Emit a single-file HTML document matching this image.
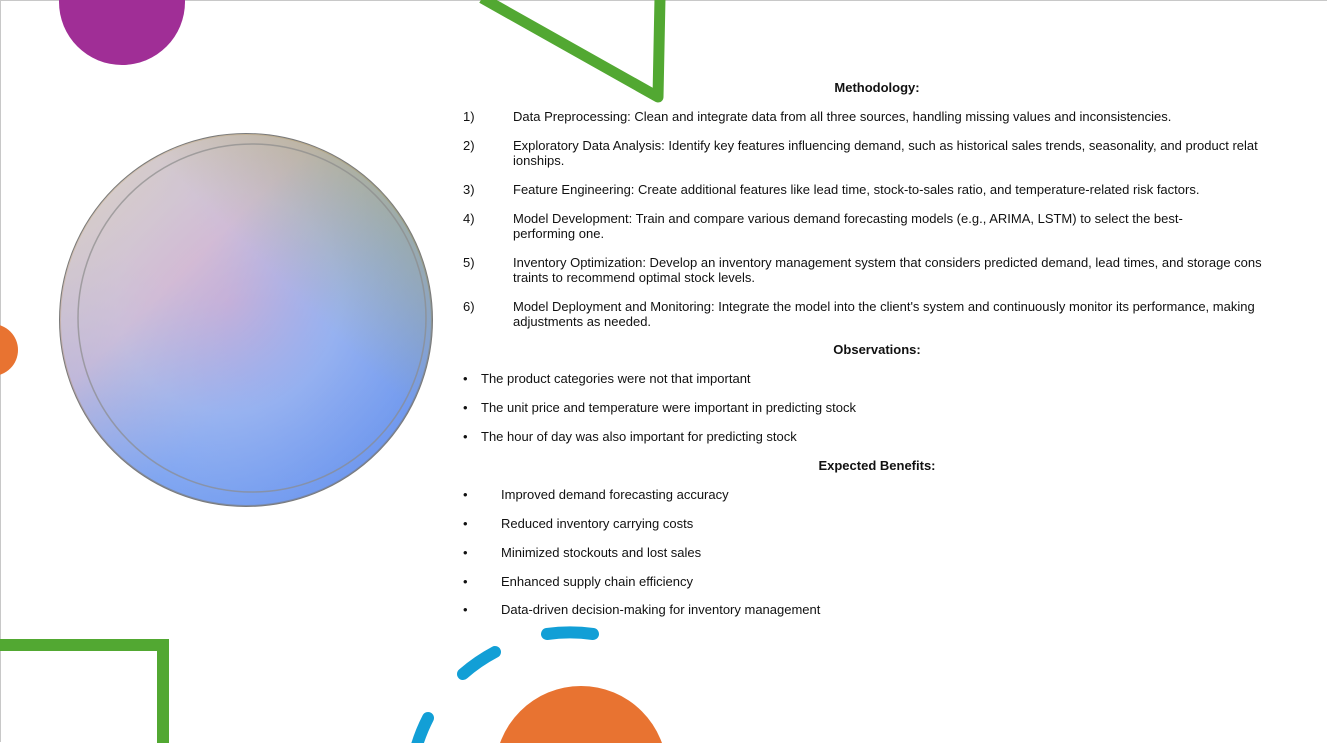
<!DOCTYPE html>
<html><head><style>
html,body{margin:0;width:1328px;height:743px;overflow:hidden}
body{background:#fff;position:relative;font-family:"Liberation Sans",Arial,sans-serif;font-size:13px;color:#111}
.frame{position:absolute;left:0;top:0;width:1326px;height:741px;border-left:1px solid #c8c8c8;border-top:1px solid #c8c8c8}
.t{position:absolute;white-space:nowrap}
.h{font-weight:bold;left:0;width:1754px;text-align:center}
</style></head><body>
<div class="frame"></div>
<svg width="1328" height="743" style="position:absolute;left:0;top:0">
<defs>
<radialGradient id="g1" cx="0.45" cy="0.45" r="0.6">
<stop offset="0" stop-color="#c9a6d6"/><stop offset="0.5" stop-color="#9fb4ee"/><stop offset="1" stop-color="#6f9af0"/></radialGradient>
<linearGradient id="g2" x1="0" y1="0" x2="1" y2="1">
<stop offset="0" stop-color="#efe3b8" stop-opacity="0.9"/><stop offset="0.35" stop-color="#e7c4cc" stop-opacity="0.6"/><stop offset="0.6" stop-color="#88b0f5" stop-opacity="0.3"/><stop offset="1" stop-color="#5f86e8" stop-opacity="0.6"/></linearGradient>
<linearGradient id="g3" x1="1" y1="0" x2="0" y2="1"><stop offset="0" stop-color="#b8b060" stop-opacity="0.8"/><stop offset="0.4" stop-color="#b8b060" stop-opacity="0"/></linearGradient>
</defs>
<circle cx="122" cy="2" r="63" fill="#a02e96"/>
<circle cx="-8" cy="350" r="26" fill="#e87331"/>
<circle cx="246" cy="320" r="186" fill="url(#g1)" stroke="#7a7a7a" stroke-width="2"/>
<circle cx="246" cy="320" r="186" fill="url(#g2)"/>
<circle cx="246" cy="320" r="186" fill="url(#g3)"/>
<circle cx="252" cy="318" r="174" fill="none" stroke="#8b8b8b" stroke-width="1.5" opacity="0.7"/>
<polyline points="482,-2 658,97 660,-2" fill="none" stroke="#52a832" stroke-width="11" stroke-linejoin="round"/>
<polyline points="0,645 163,645 163,745" fill="none" stroke="#52a832" stroke-width="12"/>
<circle cx="581" cy="772" r="86" fill="#e87331"/>
<g fill="none" stroke="#129fd6" stroke-width="12" stroke-linecap="round">
<path d="M547,634 A167 167 0 0 1 593,634"/>
<path d="M463,674 A167 167 0 0 1 495,652"/>
<path d="M417,745 A167 167 0 0 1 428,718"/>
</g>
</svg>
<div class="t h" style="top:80px">Methodology:</div>
<div class="t" style="left:463px;top:109px">1)</div><div class="t" style="left:513px;top:109px">Data Preprocessing: Clean and integrate data from all three sources, handling missing values and inconsistencies.</div>
<div class="t" style="left:463px;top:138px">2)</div><div class="t" style="left:513px;top:138px;line-height:15px">Exploratory Data Analysis: Identify key features influencing demand, such as historical sales trends, seasonality, and product relat<br>ionships.</div>
<div class="t" style="left:463px;top:182px">3)</div><div class="t" style="left:513px;top:182px">Feature Engineering: Create additional features like lead time, stock-to-sales ratio, and temperature-related risk factors.</div>
<div class="t" style="left:463px;top:211px">4)</div><div class="t" style="left:513px;top:211px;line-height:15px">Model Development: Train and compare various demand forecasting models (e.g., ARIMA, LSTM) to select the best-<br>performing one.</div>
<div class="t" style="left:463px;top:255px">5)</div><div class="t" style="left:513px;top:255px;line-height:15px">Inventory Optimization: Develop an inventory management system that considers predicted demand, lead times, and storage cons<br>traints to recommend optimal stock levels.</div>
<div class="t" style="left:463px;top:299px">6)</div><div class="t" style="left:513px;top:299px;line-height:15px">Model Deployment and Monitoring: Integrate the model into the client's system and continuously monitor its performance, making<br>adjustments as needed.</div>
<div class="t h" style="top:342px">Observations:</div>
<div class="t" style="left:463px;top:371px">•</div><div class="t" style="left:481px;top:371px">The product categories were not that important</div>
<div class="t" style="left:463px;top:400px">•</div><div class="t" style="left:481px;top:400px">The unit price and temperature were important in predicting stock</div>
<div class="t" style="left:463px;top:429px">•</div><div class="t" style="left:481px;top:429px">The hour of day was also important for predicting stock</div>
<div class="t h" style="top:458px">Expected Benefits:</div>
<div class="t" style="left:463px;top:487px">•</div><div class="t" style="left:501px;top:487px">Improved demand forecasting accuracy</div>
<div class="t" style="left:463px;top:516px">•</div><div class="t" style="left:501px;top:516px">Reduced inventory carrying costs</div>
<div class="t" style="left:463px;top:545px">•</div><div class="t" style="left:501px;top:545px">Minimized stockouts and lost sales</div>
<div class="t" style="left:463px;top:574px">•</div><div class="t" style="left:501px;top:574px">Enhanced supply chain efficiency</div>
<div class="t" style="left:463px;top:602px">•</div><div class="t" style="left:501px;top:602px">Data-driven decision-making for inventory management</div>
</body></html>
